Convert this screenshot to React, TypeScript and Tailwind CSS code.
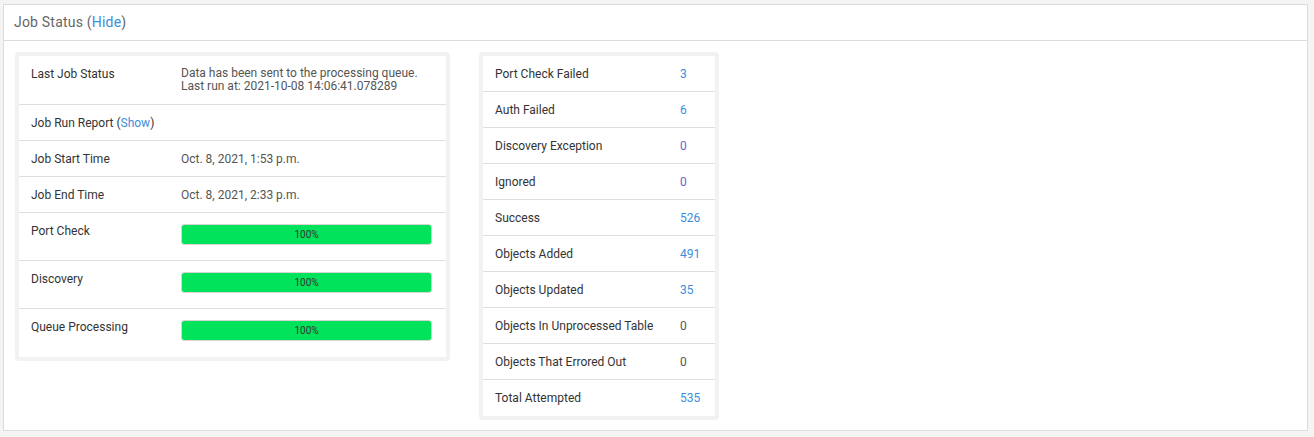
import React from "react";

type Stat = { label: string; value: string; tone: "link" | "visited" | "plain" };

const stats: Stat[] = [
  { label: "Port Check Failed", value: "3", tone: "link" },
  { label: "Auth Failed", value: "6", tone: "link" },
  { label: "Discovery Exception", value: "0", tone: "visited" },
  { label: "Ignored", value: "0", tone: "visited" },
  { label: "Success", value: "526", tone: "link" },
  { label: "Objects Added", value: "491", tone: "link" },
  { label: "Objects Updated", value: "35", tone: "link" },
  { label: "Objects In Unprocessed Table", value: "0", tone: "plain" },
  { label: "Objects That Errored Out", value: "0", tone: "plain" },
  { label: "Total Attempted", value: "535", tone: "link" },
];

const toneClass = {
  link: "text-[#3d8ddc]",
  visited: "text-[#6a5fc8]",
  plain: "text-[#555]",
};

const Progress = ({ pct }: { pct: number }) => (
  <div className="h-[21px] w-[251px] rounded-[3px] border border-[#d6d6d6] bg-[#eee] overflow-hidden">
    <div
      className="h-full bg-[#00e35a] flex items-center justify-center text-[10px] text-[#333]"
      style={{ width: `${pct}%` }}
    >
      {pct}%
    </div>
  </div>
);

const Row = ({
  label,
  children,
  last,
  tall,
}: {
  label: React.ReactNode;
  children?: React.ReactNode;
  last?: boolean;
  tall?: boolean;
}) => (
  <div
    className={`flex px-3 ${tall ? "pt-[11px] h-[48px]" : "items-center min-h-[36px]"} ${
      last ? "" : "border-b border-[#dedede]"
    }`}
  >
    <div className={`w-[150px] shrink-0 text-[#333] ${tall ? "leading-[14px]" : ""}`}>{label}</div>
    <div className="text-[#555]">{children}</div>
  </div>
);

export default function App() {
  return (
    <div
      className="min-h-[437px] bg-[#f4f4f4] pt-[4px] pl-[3px] pr-[6px] pb-[6px] text-[12px]"
      style={{ fontFamily: "Roboto, 'Liberation Sans', sans-serif" }}
    >
      <div className="bg-white border border-[#dcdcdc] h-[427px]">
        <div className="h-[36px] flex items-center px-[10px] border-b border-[#dcdcdc] text-[14px] tracking-[0.2px] text-[#666]">
          Job Status (<span className="text-[#3d8ddc]">Hide</span>)
        </div>
        <div className="flex items-start gap-[29px] pt-[11px] pl-[11px]">
          <div className="w-[435px] border-4 border-[#f2f2f2] rounded-[4px] bg-white">
            <div className="flex px-3 pt-[11px] pb-[11px] border-b border-[#dedede] leading-[13px]">
              <div className="w-[150px] shrink-0 text-[#333] pt-[1px]">Last Job Status</div>
              <div className="text-[#555]">
                Data has been sent to the processing queue.
                <br />
                Last run at: 2021-10-08 14:06:41.078289
              </div>
            </div>
            <Row
              label={
                <>
                  Job Run Report (<span className="text-[#3d8ddc]">Show</span>)
                </>
              }
            />
            <Row label="Job Start Time">Oct. 8, 2021, 1:53 p.m.</Row>
            <Row label="Job End Time">Oct. 8, 2021, 2:33 p.m.</Row>
            <Row label="Port Check" tall>
              <Progress pct={100} />
            </Row>
            <Row label="Discovery" tall>
              <Progress pct={100} />
            </Row>
            <Row label="Queue Processing" tall last>
              <Progress pct={100} />
            </Row>
          </div>
          <div className="w-[240px] border-4 border-[#f2f2f2] rounded-[4px] bg-white">
            {stats.map((s, i) => (
              <div
                key={s.label}
                className={`flex items-center h-[36px] px-3 ${
                  i < stats.length - 1 ? "border-b border-[#dedede]" : ""
                }`}
              >
                <div className="w-[185px] shrink-0 text-[#333]">{s.label}</div>
                <div className={toneClass[s.tone]}>{s.value}</div>
              </div>
            ))}
          </div>
        </div>
      </div>
    </div>
  );
}
